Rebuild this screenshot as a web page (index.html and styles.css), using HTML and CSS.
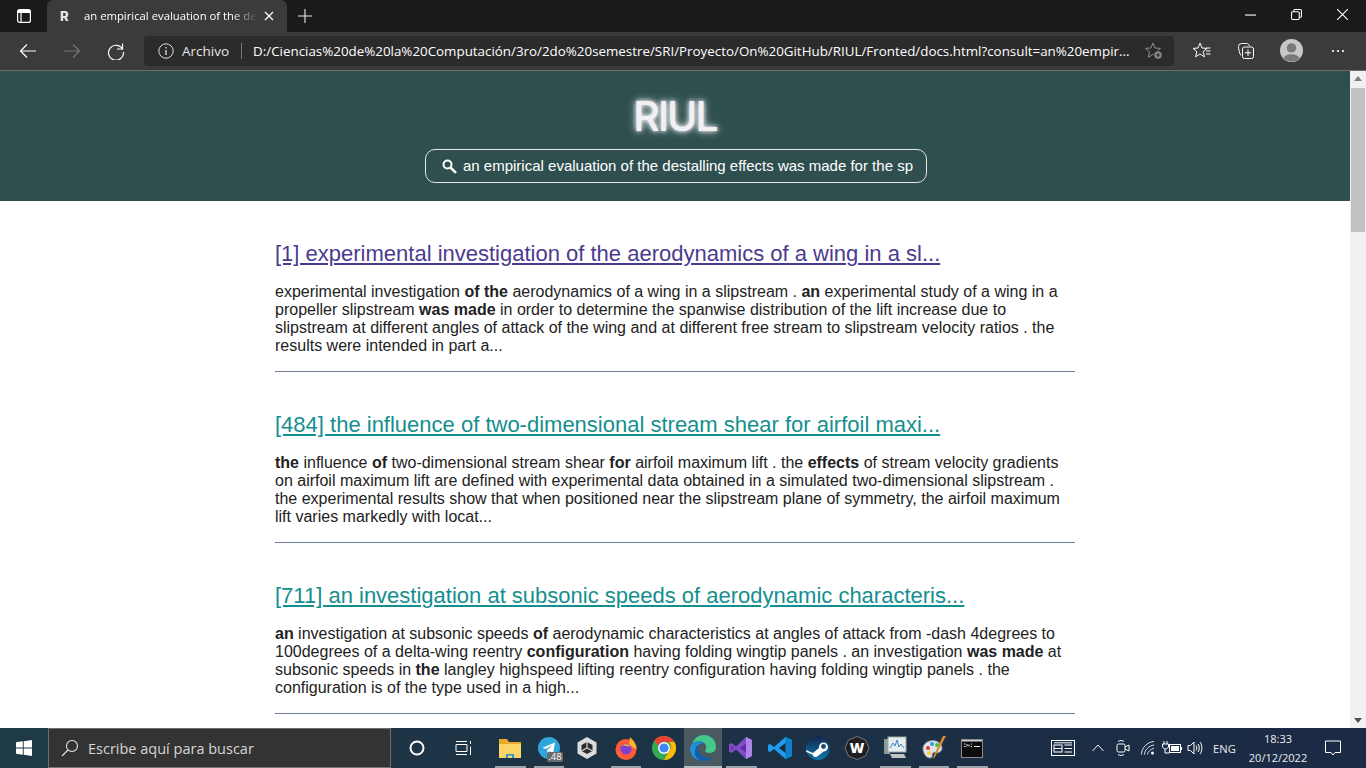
FILE: index.html
```html
<!DOCTYPE html>
<html lang="es">
<head>
<meta charset="utf-8">
<title>an empirical evaluation of the destalling effects</title>
<link rel="stylesheet" href="styles.css">
</head>
<body>
<div class="tabbar">
  <div class="tabs-btn"><svg width="16" height="16" viewBox="0 0 16 16" fill="none" stroke="#fff" stroke-width="1.2"><rect x="1.6" y="1.6" width="12.8" height="12.8" rx="2"/><path d="M1.6 4.4h12.8M5 4.4v10" /><path d="M2 2h12v2.4H2z" fill="#fff" stroke="none"/></svg></div>
  <div class="tab">
    <span class="favicon">R</span>
    <span class="tab-title">an empirical evaluation of the de</span>
    <svg class="tab-close" width="10" height="10" viewBox="0 0 10 10" stroke="#fff" stroke-width="1.2"><path d="M1 1l8 8M9 1l-8 8"/></svg>
  </div>
  <svg class="newtab" width="16" height="16" viewBox="0 0 16 16" stroke="#ececec" stroke-width="1.1"><path d="M8 1v14M1 8h14"/></svg>
  <div class="win-btns">
    <svg width="10" height="10" viewBox="0 0 10 10" stroke="#fff"><path d="M0 5.5h10"/></svg>
    <svg width="10" height="10" viewBox="0 0 10 10" stroke="#fff" fill="none"><rect x=".5" y="2.5" width="7" height="7" rx="1"/><path d="M2.5 2.5V1.5a1 1 0 0 1 1-1h5a1 1 0 0 1 1 1v5a1 1 0 0 1-1 1H7.5"/></svg>
    <svg width="10" height="10" viewBox="0 0 10 10" stroke="#fff"><path d="M0 0l10 10M10 0L0 10"/></svg>
  </div>
</div>
<div class="toolbar">
  <div class="nav">
    <svg width="18" height="16" viewBox="0 0 18 16" fill="none" stroke="#fff" stroke-width="1.2"><path d="M17 8H1.5M8 1.5L1.5 8 8 14.5"/></svg>
    <svg width="18" height="16" viewBox="0 0 18 16" fill="none" stroke="#777" stroke-width="1.2"><path d="M1 8h15.5M10 1.5L16.500 8 10 14.500"/></svg>
    <svg width="18" height="18" viewBox="0 0 18 18" fill="none" stroke="#fff" stroke-width="1.2"><path d="M15.800 7.500A7.500 7.500 0 1 0 16.500 10"/><path d="M15.500 1.500v5.500H10"/></svg>
  </div>
  <div class="address">
    <svg class="info" width="16" height="16" viewBox="0 0 16 16" fill="none" stroke="#ddd"><circle cx="8" cy="8" r="7.200"/><path d="M8 7v5M8 4v1.500" stroke-width="1.300"/></svg>
    <span class="archivo">Archivo</span>
    <span class="addr-sep"></span>
    <span class="url">D:/Ciencias%20de%20la%20Computación/3ro/2do%20semestre/SRI/Proyecto/On%20GitHub/RIUL/Fronted/docs.html?consult=an%20empir...</span>
    <svg class="addfav" width="18" height="18" viewBox="0 0 18 18" fill="none" stroke="#8c8c8c"><path d="M8 1l2.100 5 5.400.4-4.100 3.500 1.200 5.300L8 12.300l-4.600 2.900 1.200-5.300L.5 6.400 5.900 6z"/><circle cx="13" cy="13" r="4.200" fill="#8c8c8c" stroke="#2b2b2b"/><path d="M13 11v4M11 13h4" stroke="#2b2b2b" stroke-width="1.200"/></svg>
  </div>
  <div class="tools">
    <svg width="18" height="18" viewBox="0 0 18 18" fill="none" stroke="#fff"><path d="M7 1l2 5 5 .4-3.800 3.200 1.200 5.200L7 12l-4.400 2.800 1.200-5.200L0 6.400 5 6z"/><path d="M13 6h4.500M13 9h4.500M13 12h4.500"/></svg>
    <svg width="18" height="18" viewBox="0 0 18 18" fill="none" stroke="#fff"><path d="M4 13.500C2.500 12 1.500 7 1.500 4.500a3 3 0 0 1 3-3h5c1.500 0 2.500 1 3 2.500"/><rect x="5.500" y="5" width="11" height="11.500" rx="2"/><path d="M11 7.500v6.500M7.800 10.800h6.400"/></svg>
    <svg class="avatar" width="23" height="23" viewBox="0 0 22 22"><circle cx="11" cy="11" r="11" fill="#c8c8c8"/><circle cx="11" cy="8.500" r="4.500" fill="#7a7a7a"/><path d="M3.300 18.500C4.500 15.500 7.500 14.500 11 14.500s6.500 1 7.700 4A11 11 0 0 1 3.300 18.500z" fill="#7a7a7a"/></svg>
    <svg width="14" height="4" viewBox="0 0 14 4" fill="#fff"><circle cx="2" cy="2" r="1.100"/><circle cx="7" cy="2" r="1.100"/><circle cx="12" cy="2" r="1.100"/></svg>
  </div>
</div>
<div class="viewport">
  <div class="page">
    <header class="hero">
      <h1 class="brand">RIUL</h1>
      <div class="searchbox">
        <svg width="16" height="16" viewBox="0 0 16 16" fill="none" stroke="#fff"><circle cx="6.500" cy="6.500" r="4" stroke-width="2"/><path d="M9.800 9.800l4.400 4.400" stroke-width="2.600" stroke-linecap="round"/></svg>
        <span class="query">an empirical evaluation of the destalling effects was made for the sp</span>
      </div>
    </header>
    <main class="results">
      <article class="result">
        <h2 class="result-title"><a class="visited" href="#">[1] experimental investigation of the aerodynamics of a wing in a sl...</a></h2>
        <p class="snippet">experimental investigation <b>of the</b> aerodynamics of a wing in a slipstream . <b>an</b> experimental study of a wing in a<br>propeller slipstream <b>was made</b> in order to determine the spanwise distribution of the lift increase due to<br>slipstream at different angles of attack of the wing and at different free stream to slipstream velocity ratios . the<br>results were intended in part a...</p>
      </article>
      <article class="result">
        <h2 class="result-title"><a href="#">[484] the influence of two-dimensional stream shear for airfoil maxi...</a></h2>
        <p class="snippet"><b>the</b> influence <b>of</b> two-dimensional stream shear <b>for</b> airfoil maximum lift . the <b>effects</b> of stream velocity gradients<br>on airfoil maximum lift are defined with experimental data obtained in a simulated two-dimensional slipstream .<br>the experimental results show that when positioned near the slipstream plane of symmetry, the airfoil maximum<br>lift varies markedly with locat...</p>
      </article>
      <article class="result">
        <h2 class="result-title"><a href="#">[711] an investigation at subsonic speeds of aerodynamic characteris...</a></h2>
        <p class="snippet"><b>an</b> investigation at subsonic speeds <b>of</b> aerodynamic characteristics at angles of attack from -dash 4degrees to<br>100degrees of a delta-wing reentry <b>configuration</b> having folding wingtip panels . an investigation <b>was made</b> at<br>subsonic speeds in <b>the</b> langley highspeed lifting reentry configuration having folding wingtip panels . the<br>configuration is of the type used in a high...</p>
      </article>
    </main>
  </div>
  <div class="scrollbar">
    <svg width="16" height="16" viewBox="0 0 16 16" fill="#7d7d7d"><path d="M8 5l4 5H4z"/></svg>
    <div class="thumb"></div>
    <svg class="sb-down" width="16" height="16" viewBox="0 0 16 16" fill="#505050"><path d="M4 6h8l-4 5z"/></svg>
  </div>
</div>
<footer class="taskbar">
  <div class="start"><svg width="16" height="16" viewBox="0 0 16 16" fill="#fff"><path d="M0 2.300L6.800 1.300V7.500H0zM7.700 1.200L16 0v7.500H7.700zM0 8.400h6.800v6.300L0 13.700zM7.700 8.400H16V16l-8.300-1.200z"/></svg></div>
  <div class="tb-search">
    <svg width="18" height="18" viewBox="0 0 18 18" fill="none" stroke="#e6e6e6" stroke-width="1.100"><circle cx="11" cy="7" r="5.500"/><path d="M7 11l-6 6"/></svg>
    <span>Escribe aquí para buscar</span>
  </div>
  <div class="tb-sys">
    <svg width="16" height="16" viewBox="0 0 16 16" fill="none" stroke="#fff" stroke-width="2"><circle cx="8" cy="8" r="6.500"/></svg>
    <svg width="18" height="16" viewBox="0 0 18 16" fill="none" stroke="#fff"><path d="M1 1.500h11M1 14.500h11M12 4.500H1v7h11zM15.500 1v3M15.500 6.500v8.500"/></svg>
  </div>
  <div class="apps">
    <div class="app running"><svg width="24" height="22" viewBox="0 0 24 22"><path d="M1 2h8l2 3h12v16H1z" fill="#e8a92c"/><path d="M1 7h22v14H1z" fill="#fbd667"/><path d="M8 17h8v4H8z" fill="#2f8fd8"/><path d="M10 18.500h4V21h-4z" fill="#fbd667"/></svg></div>
    <div class="app running"><svg width="22" height="22" viewBox="0 0 22 22"><circle cx="11" cy="11" r="11" fill="#2ea6da"/><path d="M4.500 10.800L17 5.500l-2 11.500-3.700-2.700-1.800 1.800-.4-3.200 5.500-5-6.800 4.200z" fill="#fff"/></svg><span class="count">.48</span></div>
    <div class="app"><svg width="22" height="24" viewBox="0 0 22 24"><path d="M11 1l9.500 5.500v11L11 23l-9.500-5.500v-11z" fill="#dcdcdc"/><path d="M11 6l5.500 3v6L11 18l-5.500-3V9z" fill="#2c2c2c"/><path d="M11 6v6l5.500 3M11 12l-5.500 3" stroke="#dcdcdc" stroke-width="1.200" fill="none"/></svg></div>
    <div class="app running"><svg width="24" height="24" viewBox="0 0 24 24"><circle cx="12" cy="13.500" r="10.500" fill="#ff5a36"/><path d="M16 1c3 3 7 7 6.500 12.500L15 9z" fill="#ffb32c"/><path d="M2 11C3 17 8 24 15 23c-8 0-12-5-13-12z" fill="#ffa12b"/><circle cx="12" cy="13" r="5.500" fill="#7b3fd6"/><path d="M8 9.500c3-2 7-1.500 8 1-2-.5-5-.5-8-1z" fill="#ffb32c"/></svg></div>
    <div class="app"><svg width="24" height="24" viewBox="0 0 24 24"><circle cx="12" cy="12" r="12" fill="#34a853"/><path d="M12 0a12 12 0 0 1 10.400 6H12a6 6 0 0 0-5.700 4L2.200 4.500A12 12 0 0 1 12 0z" fill="#ea4335"/><path d="M22.400 6A12 12 0 0 1 12 24l5.200-9a6 6 0 0 0-.4-9z" fill="#fbbc05"/><circle cx="12" cy="12" r="6" fill="#fff"/><circle cx="12" cy="12" r="4.600" fill="#4285f4"/></svg></div>
    <div class="app active"><svg width="26" height="26" viewBox="0 0 24 24"><path d="M2 8C4 2.500 8.500 0 12.500 0 19 0 24 4.500 24 11c0 3.500-2.500 5.500-5.800 5.500-2.200 0-4.200-.8-4.200-2 0-.8 1-1.300 1-3C15 8 12 5.500 8.500 5.500 5.800 5.500 3.500 6.500 2 8z" fill="#45c98a"/><path d="M2 8C3.500 6.500 5.800 5.500 8.500 5.500c1.800 0 3.500.7 4.800 1.800C8.500 7 4.500 11 4.500 15.500c0 3 1.500 6 4.500 8C4 22.500 0 18 0 12.500 0 11 .7 9.500 2 8z" fill="#1f8fd8"/><path d="M9 23.500c-3-2-4.500-5-4.500-8 0-3 1.800-5.800 4.500-7.200-1 1.200-1.500 2.700-1.500 4.200 0 4.500 3.800 8.500 9 8.500 2 0 3.500-.4 5-1.200C19.500 22.300 16 24 12.500 24c-1.200 0-2.400-.2-3.500-.5z" fill="#0f5fae"/></svg></div>
    <div class="app running"><svg width="24" height="24" viewBox="0 0 24 24"><path d="M17 1l6 3v16l-6 3L7 13.500 2.500 17 0 15.800V8.200L2.500 7 7 10.500z" fill="#854cc7"/><path d="M17 1l6 3v16l-6 3z" fill="#b184e8"/><path d="M17 7.500v9L11 12zM2.500 9.500v5L5 12z" fill="#5e2ca5"/></svg></div>
    <div class="app"><svg width="24" height="24" viewBox="0 0 24 24"><path d="M17.500 1L24 4v16l-6.500 3L6 13 2 16 0 15V9l2-1 4 3z" fill="#1f9cf0"/><path d="M17.500 1L24 4v16l-6.500 3z" fill="#0f7fcb"/><path d="M17.500 7l-6.500 5 6.500 5z" fill="#182c3c"/></svg></div>
    <div class="app"><svg width="24" height="24" viewBox="0 0 24 24"><defs><linearGradient id="steamg" x1="0" y1="0" x2="0" y2="1"><stop offset="0" stop-color="#14254a"/><stop offset="1" stop-color="#0f76b0"/></linearGradient></defs><circle cx="12" cy="12" r="12" fill="url(#steamg)"/><path d="M0 14l7 3 6-5 0-1a4.500 4.500 0 1 1 4.500 4.500L12 20c-2 2-5 1-5.500-1.500L.5 16z" fill="#fff"/><circle cx="17.500" cy="10.500" r="2.400" fill="#1b4a75"/></svg></div>
    <div class="app"><svg width="26" height="26" viewBox="0 0 26 26"><path d="M13 1.500l8.500 3.500 3.500 8-3.500 8-8.500 3.500-8.500-3.500L1 13l3.500-8z" fill="#1d1d22" stroke="#777"/><text class="w-glyph" x="13" y="18">W</text></svg></div>
    <div class="app running"><svg width="24" height="24" viewBox="0 0 24 24"><rect x="1" y="3" width="6" height="15" fill="#8f9a96"/><rect x="5" y="1" width="18" height="15" fill="#e8eef0" stroke="#9aa"/><path d="M7 12l3-5 2 3 2-6 2 7 2-3 3 4" fill="none" stroke="#3b86c9"/><path d="M7 18h14l2 4H9z" fill="#bfc6c6"/></svg></div>
    <div class="app running"><svg width="26" height="26" viewBox="0 0 26 26"><path d="M2 15C1 8 9 4 15 6c6 2 8 8 4 11-3 2-5-1-7 1s1 5-3 5c-4 0-6-4-7-8z" fill="#dfe6ea" stroke="#889"/><circle cx="7" cy="13" r="2" fill="#e33"/><circle cx="11" cy="9" r="2" fill="#2a9de8"/><circle cx="16" cy="10" r="2" fill="#4b4"/><circle cx="8" cy="18" r="2" fill="#fc3"/><path d="M25 1l-11 21-2 2 1-4 9-19z" fill="#d98d2b"/></svg></div>
    <div class="app running"><svg width="22" height="19" viewBox="0 0 22 19"><rect x=".5" y=".5" width="21" height="18" fill="#0c0c0c" stroke="#8a8a8a"/><rect x="1" y="1" width="20" height="1.500" fill="#cfcfcf"/><path d="M3 5h1.500M3 7.500h1.500M6 5v2.500M8 5.500v2M10 5h1M10 7.500h1M13 7.500h6" fill="none" stroke="#eee"/></svg></div>
  </div>
  <div class="tray">
    <svg class="tr-news" width="24" height="16" viewBox="0 0 24 16" fill="none" stroke="#fff"><rect x=".5" y=".5" width="23" height="15"/><rect x="3" y="5" width="8" height="7"/><path d="M3 8.500h8M13.500 5H21M13.500 8.500H21M13.500 12H21M3 2.800h18"/></svg>
    <svg class="tr-chev" width="12" height="8" viewBox="0 0 12 8" fill="none" stroke="#fff"><path d="M.5 7l5.500-6 5.500 6"/></svg>
    <svg class="tr-meet" width="14" height="18" viewBox="0 0 14 18" fill="none" stroke="#fff"><rect x="1" y="5" width="8" height="8" rx="1.500"/><path d="M9 8l4-2v6l-4-2M2 2.500c2-1.300 4-1.300 6 0M2 15.500c2 1.300 4 1.300 6 0"/></svg>
    <svg class="tr-wifi" width="14" height="14" viewBox="0 0 14 14" fill="none" stroke="#dfe4e8"><path d="M.5 13.500C.5 7 6 1 13 .5M3.500 13.500C3.500 9 8 4.500 13 4M6.500 13.500C6.500 11 9.500 8 13 7.500"/><circle cx="11.500" cy="12" r="1.500" fill="#fff" stroke="none"/></svg>
    <svg class="tr-batt" width="20" height="14" viewBox="0 0 20 14" fill="#fff"><path d="M2 0v3M5 0v3M.5 3h6v3l-2 2H2.500L.5 6zM3 8v4h4" stroke="#fff" fill="none"/><rect x="7.500" y="3.500" width="11" height="8" fill="none" stroke="#fff"/><rect x="9" y="5" width="8" height="5"/><rect x="19" y="6" width="1" height="3"/></svg>
    <svg class="tr-vol" width="16" height="14" viewBox="0 0 16 14" fill="none" stroke="#fff"><path d="M1 4.500h2.500L7 1v12L3.500 9.500H1zM9 4.500c1 1.500 1 3.500 0 5M11 3c1.700 2.500 1.700 5.500 0 8M13 1c2.500 3.500 2.500 8.500 0 12"/></svg>
    <span class="lang">ENG</span>
    <div class="clock"><span>18:33</span><span>20/12/2022</span></div>
    <svg class="tr-notif" width="16" height="16" viewBox="0 0 16 16" fill="none" stroke="#fff"><path d="M.5 1h15v11.500H10l-2 2.500-2-2.500H.5z"/></svg>
  </div>
</footer>
</body>
</html>
```
FILE: styles.css
```css
* { box-sizing: border-box; }
html, body { margin: 0; height: 768px; overflow: hidden; }
body { display: flex; flex-direction: column; font-family: "Liberation Sans", Arial, sans-serif; background: #fff; }

.tabbar { height: 32px; background: #1a1a1a; display: flex; align-items: stretch; flex: none; }
.tabs-btn { width: 47px; display: flex; align-items: center; justify-content: center; }
.tab { width: 240px; background: #3b3b3b; border-radius: 6px 6px 0 0; display: flex; align-items: center; padding-left: 13px; font-family: "Open Sans", sans-serif; font-size: 11.300px; color: #fff; position: relative; padding-bottom: 1px; }
.favicon { width: 24px; font-family: Inter, sans-serif; font-weight: 800; font-size: 13px; flex: none; color: #e9e9e9; }
.tab-title { width: 174px; white-space: nowrap; -webkit-mask-image: linear-gradient(90deg, #000 85%, transparent); mask-image: linear-gradient(90deg, #000 85%, transparent); }
.tab-close { margin-left: 6px; flex: none; }
.newtab { align-self: center; margin-left: 10px; }
.win-btns { margin-left: auto; display: flex; align-items: center; gap: 35px; padding-right: 18px; padding-bottom: 3px; }
.win-btns svg { width: 11px; height: 11px; }

.toolbar { height: 39px; background: #3b3b3b; display: flex; align-items: center; flex: none; border-bottom: 1px solid #6c6c6c; padding-bottom: 1px; }
.nav { width: 144px; display: flex; align-items: center; gap: 26px; padding-left: 19px; }
.address { width: 1030px; height: 30px; background: #2b2b2b; border-radius: 4px; display: flex; align-items: center; padding-left: 14px; font-family: "Open Sans", sans-serif; font-size: 13.5px; color: #fff; }
.archivo { margin-left: 8px; color: #e6e6e6; font-size: 13.500px; }
.addr-sep { width: 1px; height: 16px; background: #777; margin: 0 11px 0 12px; }
.url { width: 876px; white-space: nowrap; font-size: 13.360px; }
.addfav { margin-left: 16px; }
.tools { display: flex; align-items: center; padding-left: 19px; gap: 26px; }
.avatar { margin-left: -1px; margin-right: 2px; }

.viewport { flex: 1; min-height: 0; display: flex; }
.page { flex: 1; min-width: 0; overflow: hidden; }
.hero { height: 130px; background: #2f4f4f; display: flex; flex-direction: column; align-items: center; }
.brand { margin: 22px 0 0; height: 56px; font-family: Inter, sans-serif; font-size: 41px; line-height: 46px; font-weight: 500; letter-spacing: -2px; color: #f2f0f5; text-shadow: 0 0 4px #fff, 0 0 9px rgba(255, 255, 255, .8); }
.searchbox { width: 502px; height: 34px; margin-left: 2px; border: 1px solid #e6e6e6; border-radius: 10px; display: flex; align-items: center; padding: 0 0 1px 15px; gap: 6px; color: #fff; font-size: 15px; white-space: nowrap; }
.searchbox svg { flex: none; }
.results { width: 800px; margin-left: 275px; padding-top: 37px; }
.result { height: 171px; position: relative; }
.result-title { margin: 0 0 13px; font-size: 22px; line-height: 32px; font-weight: 400; }
.result-title a { color: #148f8f; }
.result-title a.visited { color: #4b3b8f; }
.snippet { margin: 0; font-size: 16px; line-height: 18px; color: #222; padding-bottom: 16px; border-bottom: 1px solid #708090; }

.scrollbar { width: 16px; flex: none; background: #f1f1f1; display: flex; flex-direction: column; }
.thumb { height: 144px; width: 14px; margin: 1px; background: #c1c1c1; }
.sb-down { margin-top: auto; }

.taskbar { height: 40px; flex: none; display: flex; align-items: center; background: linear-gradient(90deg, #1e3a46, #1b2a45); color: #fff; }
.start { width: 48px; display: flex; justify-content: center; }
.tb-search { width: 343px; height: 40px; background: #333; border: 1px solid #6e6e6e; border-bottom-color: #777; display: flex; align-items: center; padding-left: 12px; gap: 9px; font-family: "Open Sans", sans-serif; font-size: 14.500px; color: #d6d6d6; }
.tb-sys { width: 100px; display: flex; align-items: center; gap: 30px; padding-left: 18px; }
.apps { display: flex; align-items: stretch; height: 40px; }
.app { width: 38.500px; position: relative; display: flex; align-items: center; justify-content: center; }
.app.running::after { content: ""; position: absolute; left: 4px; right: 4px; bottom: 0; height: 2px; background: #9aa5ab; }
.app.active { background: #4a5a60; }
.app.active::after { content: ""; position: absolute; left: 0; right: 0; bottom: 0; height: 2px; background: #b5bec2; }
.count { position: absolute; right: 5px; bottom: 6px; width: 16px; height: 10px; text-align: center; background: #6b6b6b; color: #fff; font-family: "Open Sans", sans-serif; font-size: 9.500px; line-height: 10px; border-radius: 2px; }
.w-glyph { fill: #fff; font-family: "Open Sans", sans-serif; font-size: 14px; font-weight: 800; text-anchor: middle; }
.tray { margin-left: auto; display: flex; align-items: center; height: 40px; }
.tray svg { flex: none; }
.tr-news { margin-right: 17px; }
.tr-chev { margin-right: 12px; }
.tr-meet { margin-right: 11px; }
.tr-wifi { margin-right: 7px; }
.tr-batt { margin-right: 5px; }
.tr-vol { margin-right: 10px; }
.lang { font-family: "Open Sans", sans-serif; font-size: 11.200px; width: 27px; color: #eee; }
.clock { width: 72px; margin-left: 2px; display: flex; flex-direction: column; align-items: center; font-family: "Open Sans", sans-serif; font-size: 11px; line-height: 19px; color: #eee; }
.tr-notif { margin-left: 11px; margin-right: 25px; }
```
